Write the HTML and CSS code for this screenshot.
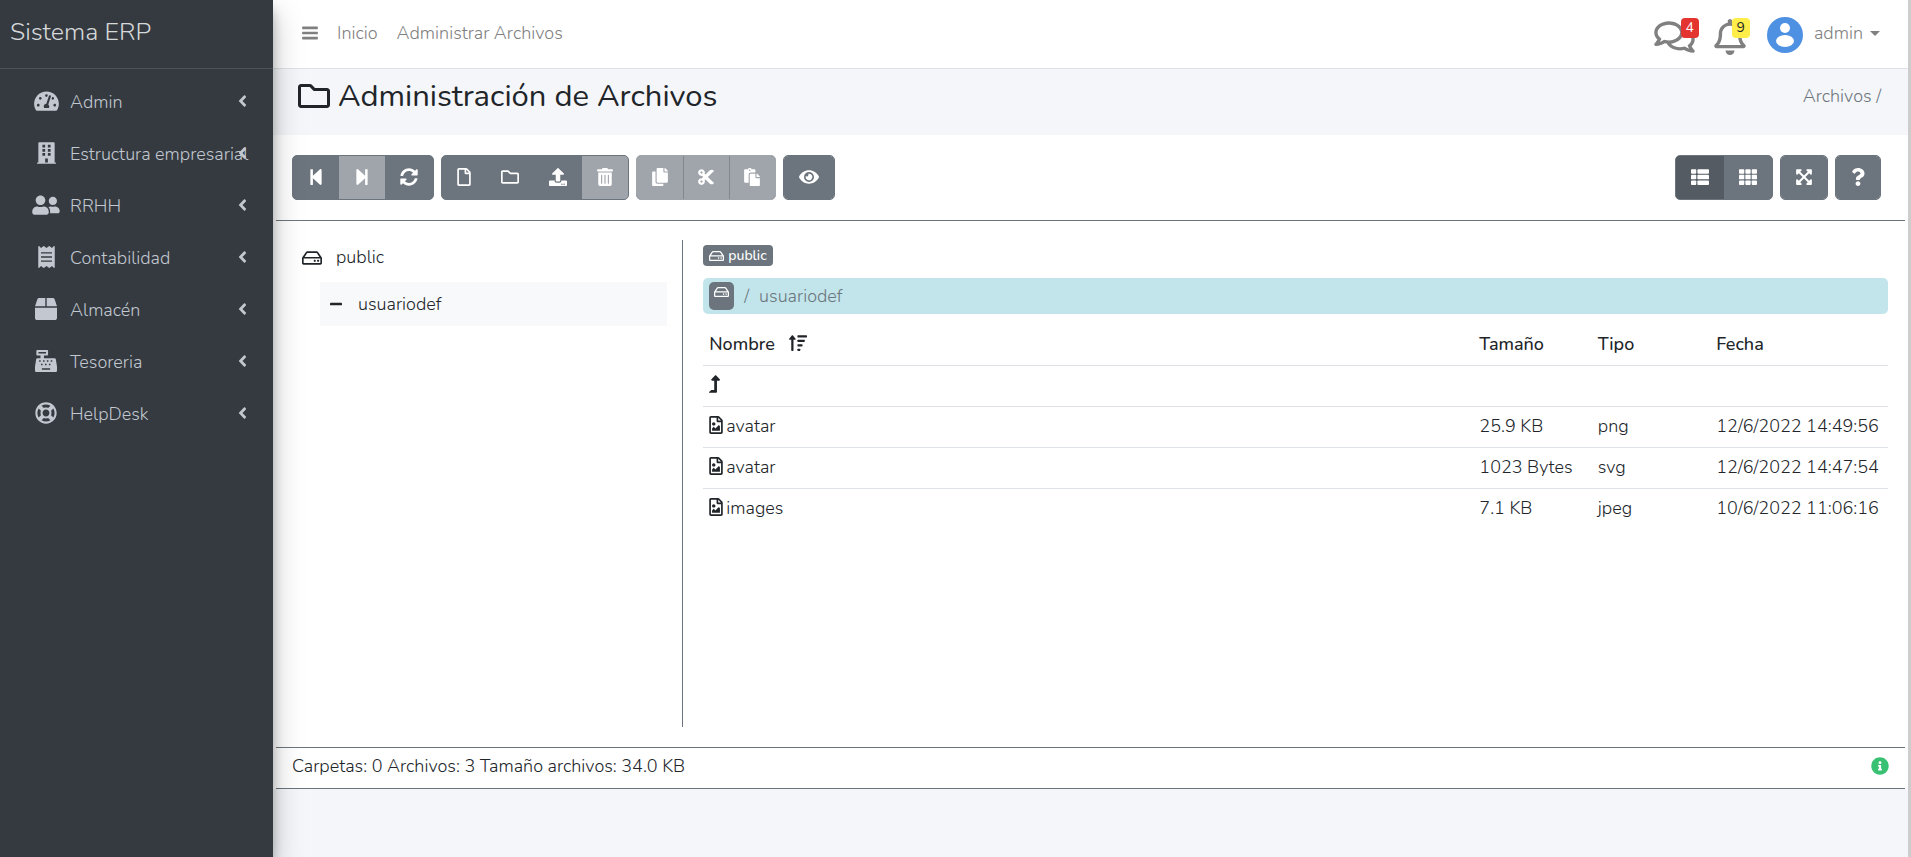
FILE: index.html
```html
<!DOCTYPE html>
<html lang="es">
<head>
<meta charset="utf-8">
<title>Administración de Archivos - Sistema ERP</title>
<link rel="stylesheet" href="styles.css">
</head>
<body>
<svg class="sprite" aria-hidden="true">
  <symbol id="i-dash" viewBox="0 0 576 512"><path d="M288 32C128.94 32 0 160.94 0 320c0 52.8 14.25 102.26 39.06 144.8 5.61 9.62 16.3 15.2 27.44 15.2h443c11.14 0 21.83-5.58 27.44-15.2C561.75 422.26 576 372.8 576 320c0-159.06-128.94-288-288-288zm0 64c14.71 0 26.58 10.13 30.32 23.65-1.11 2.26-2.64 4.23-3.45 6.67l-9.22 27.67c-5.13 3.49-10.97 6.01-17.64 6.01-17.67 0-32-14.33-32-32S270.33 96 288 96zM96 384c-17.67 0-32-14.33-32-32s14.33-32 32-32 32 14.33 32 32-14.33 32-32 32zm48-160c-17.67 0-32-14.33-32-32s14.33-32 32-32 32 14.33 32 32-14.33 32-32 32zm246.77-72.41l-61.33 184C343.13 347.33 352 364.54 352 384c0 11.72-3.38 22.55-8.88 32H232.88c-5.5-9.45-8.88-20.28-8.88-32 0-33.94 26.5-61.43 59.9-63.59l61.34-184.01c4.17-12.56 17.73-19.45 30.36-15.17 12.57 4.19 19.35 17.79 15.17 30.36zm14.66 57.2l15.52-46.55c3.47-1.29 7.13-2.23 11.05-2.23 17.67 0 32 14.33 32 32s-14.33 32-32 32c-11.38-.01-20.89-6.28-26.57-15.22zM480 384c-17.67 0-32-14.33-32-32s14.33-32 32-32 32 14.33 32 32-14.33 32-32 32z"/></symbol>
  <symbol id="i-building" viewBox="0 0 448 512"><path fill-rule="evenodd" d="M436 480h-20V24c0-13.3-10.7-24-24-24H56C42.700 0 32 10.700 32 24v456H12c-6.600 0-12 5.400-12 12v20h448v-20c0-6.600-5.400-12-12-12zM128 64h64v64h-64zM256 64h64v64h-64zM128 160h64v64h-64zM256 160h64v64h-64zM128 256h64v64h-64zM256 256h64v64h-64zM192 384h64v96h-64z"/></symbol>
  <symbol id="i-users" viewBox="0 0 640 512"><path d="M192 256c61.9 0 112-50.1 112-112S253.9 32 192 32 80 82.100 80 144s50.100 112 112 112zm76.800 32h-8.300c-20.800 10-43.900 16-68.500 16s-47.600-6-68.500-16h-8.300C51.600 288 0 339.600 0 403.200V432c0 26.500 21.500 48 48 48h288c26.500 0 48-21.500 48-48v-28.800c0-63.600-51.600-115.200-115.200-115.200zM480 256c53 0 96-43 96-96s-43-96-96-96-96 43-96 96 43 96 96 96zm48 32h-3.800c-13.900 4.800-28.600 8-44.200 8s-30.300-3.200-44.200-8H432c-20.400 0-39.200 5.900-55.700 15.400 24.400 26.300 39.700 61.200 39.700 99.800v38.400c0 2.200-.5 4.300-.6 6.400H592c26.500 0 48-21.500 48-48 0-61.900-50.100-112-112-112z"/></symbol>
  <symbol id="i-receipt" viewBox="0 0 384 512"><path fill-rule="evenodd" d="M358.400 3.200L320 48 265.600 3.200a15.900 15.900 0 0 0-19.200 0L192 48 137.600 3.200a15.900 15.900 0 0 0-19.200 0L64 48 25.600 3.200C15-4.700 0 2.800 0 16v480c0 13.200 15 20.700 25.600 12.800L64 464l54.400 44.800a15.900 15.900 0 0 0 19.200 0L192 464l54.400 44.800a15.900 15.900 0 0 0 19.200 0L320 464l38.400 44.800c10.500 7.900 25.600.4 25.600-12.800V16c0-13.200-15-20.700-25.600-12.800zM64 336h256v32H64zM64 240h256v32H64zM64 144h256v32H64z"/></symbol>
  <symbol id="i-box" viewBox="0 0 512 512"><path d="M509.500 184.600L458.900 32.800C452.400 13.200 434.100 0 413.400 0H272v192h238.700c-.4-2.500-.4-5-1.200-7.400zM240 0H98.600c-20.700 0-39 13.200-45.500 32.800L2.500 184.600c-.8 2.400-.8 4.900-1.200 7.400H240V0zM0 224v240c0 26.500 21.500 48 48 48h416c26.500 0 48-21.500 48-48V224H0z"/></symbol>
  <symbol id="i-register" viewBox="0 0 512 512"><path fill-rule="evenodd" d="M511 378l-26-160c-3-15-16-26-32-26H208v-64h80c9 0 16-7 16-16V16c0-9-7-16-16-16H48c-9 0-16 7-16 16v96c0 9 7 16 16 16h80v64H59c-16 0-29 11-32 26L1 378c-1 4-1 8-1 12v90c0 18 14 32 32 32h448c18 0 32-14 32-32v-90c0-4 0-8-1-12zM80 48h176v32H80zM96 240h36v36H96zM186 240h36v36h-36zM276 240h36v36h-36zM366 240h36v36h-36zM140 320h36v36h-36zM232 320h36v36h-36zM324 320h36v36h-36zM160 424h192v36H160z"/></symbol>
  <symbol id="i-ring" viewBox="0 0 512 512"><path d="M256 504c136.967 0 248-111.033 248-248S392.967 8 256 8 8 119.033 8 256s111.033 248 248 248zm-103.398-76.720l53.411-53.411c31.806 13.506 68.128 13.522 99.974 0l53.411 53.411c-63.217 38.319-143.579 38.319-206.796 0zM336 256c0 44.112-35.888 80-80 80s-80-35.888-80-80 35.888-80 80-80 80 35.888 80 80zm91.280 103.398l-53.411-53.411c13.505-31.806 13.522-68.128 0-99.974l53.411-53.411c38.319 63.217 38.319 143.579 0 206.796zM359.397 84.720l-53.411 53.411c-31.806-13.505-68.128-13.522-99.973 0L152.602 84.720c63.217-38.319 143.579-38.319 206.795 0zM84.720 152.602l53.411 53.411c-13.506 31.806-13.522 68.128 0 99.974L84.720 359.398c-38.319-63.217-38.319-143.579 0-206.796z"/></symbol>
  <symbol id="i-left" viewBox="0 0 256 512"><path d="M31.700 239l136-136c9.400-9.400 24.600-9.400 33.900 0l22.600 22.600c9.400 9.400 9.400 24.600 0 33.900L127.900 256l96.400 96.400c9.400 9.400 9.400 24.600 0 33.900L201.700 409c-9.400 9.400-24.600 9.400-33.900 0l-136-136c-9.500-9.400-9.500-24.600-.1-34z"/></symbol>
  <symbol id="i-bars" viewBox="0 0 448 512"><path d="M16 74h416c9 0 16 7 16 16v40c0 9-7 16-16 16H16c-9 0-16-7-16-16V90c0-9 7-16 16-16zM16 220h416c9 0 16 7 16 16v40c0 9-7 16-16 16H16c-9 0-16-7-16-16v-40c0-9 7-16 16-16zM16 366h416c9 0 16 7 16 16v40c0 9-7 16-16 16H16c-9 0-16-7-16-16v-40c0-9 7-16 16-16z"/></symbol>
  <symbol id="i-comments" viewBox="0 0 576 512"><path d="M532 386.200c27.500-27.100 44-61.100 44-98.200 0-80-76.500-146.100-176.200-157.900C368.300 72.500 294.300 32 208 32 93.100 32 0 103.600 0 192c0 37 16.500 71 44 98.200-15.300 30.700-37.300 54.500-37.700 54.900-6.300 6.700-8.100 16.500-4.400 25 3.600 8.500 12 14 21.200 14 53.500 0 96.700-20.200 125.200-38.800 9.200 2.100 18.700 3.700 28.400 4.900C208.100 407.600 281.800 448 368 448c20.800 0 40.800-2.400 59.800-6.800C456.300 459.700 499.400 480 553 480c9.200 0 17.500-5.500 21.200-14 3.600-8.500 1.900-18.300-4.400-25-.4-.3-22.500-24.100-37.800-54.800zm-392.800-92.300L122.100 305c-14.100 9.100-28.500 16.300-43.100 21.400 2.700-4.700 5.400-9.700 8-14.800l15.500-31.100L77.700 256C64.200 242.600 48 220.700 48 192c0-60.700 73.300-112 160-112s160 51.300 160 112-73.300 112-160 112c-16.500 0-33-1.900-49-5.600l-19.800-4.500zM498.300 352l-24.700 24.400 15.500 31.100c2.600 5.100 5.300 10.100 8 14.800-14.600-5.100-29-12.300-43.100-21.400l-17.100-11.100-19.900 4.600c-16 3.700-32.500 5.600-49 5.600-54 0-102.200-20.100-131.300-49.700C338 339.500 416 272.900 416 192c0-3.400-.4-6.700-.7-10C479.700 196.500 528 238.800 528 288c0 28.700-16.200 50.600-29.700 64z"/></symbol>
  <symbol id="i-bell" viewBox="0 0 448 512"><path d="M439.390 362.290c-19.320-20.760-55.470-51.990-55.470-154.290 0-77.700-54.480-139.900-127.940-155.160V32c0-17.670-14.320-32-31.980-32s-31.980 14.330-31.980 32v20.840C118.560 68.100 64.080 130.300 64.080 208c0 102.300-36.150 133.530-55.470 154.290-6 6.450-8.660 14.160-8.610 21.710.11 16.400 12.980 32 32.100 32h383.800c19.120 0 32-15.600 32.100-32 .05-7.550-2.610-15.270-8.610-21.710zM67.530 368c21.220-27.970 44.420-74.330 44.530-159.420 0-.2-.06-.38-.06-.58 0-61.860 50.140-112 112-112s112 50.140 112 112c0 .2-.06.38-.06.58.11 85.100 23.310 131.460 44.530 159.420H67.530zM224 512c35.320 0 63.970-28.650 63.970-64H160.030c0 35.350 28.650 64 63.970 64z"/></symbol>
  <symbol id="i-folder" viewBox="0 0 512 512"><path d="M464 128H272l-54.630-54.630c-6-6-14.140-9.370-22.630-9.370H48C21.490 64 0 85.490 0 112v288c0 26.510 21.490 48 48 48h416c26.510 0 48-21.490 48-48V176c0-26.510-21.490-48-48-48zm0 272H48V112h140.120l54.630 54.630c6 6 14.140 9.370 22.630 9.370H464v224z"/></symbol>
  <symbol id="i-back" viewBox="0 0 448 512"><path d="M64 468V44c0-6.600 5.400-12 12-12h48c6.600 0 12 5.400 12 12v176.400l195.500-181C352.100 22.300 384 36.600 384 64v384c0 27.400-31.900 41.700-52.500 24.600L136 292.700V468c0 6.600-5.400 12-12 12H76c-6.600 0-12-5.400-12-12z"/></symbol>
  <symbol id="i-forward" viewBox="0 0 448 512"><path d="M384 44v424c0 6.600-5.400 12-12 12h-48c-6.600 0-12-5.400-12-12V291.600l-195.500 181C95.900 489.700 64 475.400 64 448V64c0-27.400 31.900-41.700 52.500-24.600L312 219.300V44c0-6.600 5.400-12 12-12h48c6.600 0 12 5.400 12 12z"/></symbol>
  <symbol id="i-sync" viewBox="0 0 512 512"><path d="M370.720 133.280C339.458 104.008 298.888 87.962 255.848 88c-77.458.068-144.328 53.178-162.791 126.850-1.344 5.363-6.122 9.150-11.651 9.150H24.103c-7.498 0-13.194-6.807-11.807-14.176C33.933 94.924 134.813 8 256 8c66.448 0 126.791 26.136 171.315 68.685L463.030 40.970C478.149 25.851 504 36.559 504 57.941V192c0 13.255-10.745 24-24 24H345.941c-21.382 0-32.090-25.851-16.971-40.971l41.750-41.749zM32 296h134.059c21.382 0 32.090 25.851 16.971 40.971l-41.750 41.750c31.262 29.273 71.835 45.319 114.876 45.280 77.418-.07 144.315-53.144 162.787-126.849 1.344-5.363 6.122-9.150 11.651-9.150h57.304c7.498 0 13.194 6.807 11.807 14.176C478.067 417.076 377.187 504 256 504c-66.448 0-126.791-26.136-171.315-68.685L48.970 471.030C33.851 486.149 8 475.441 8 454.059V320c0-13.255 10.745-24 24-24z"/></symbol>
  <symbol id="i-file" viewBox="0 0 384 512"><path d="M369.900 97.900L286 14C277 5 264.800-.1 252.100-.1H48C21.500 0 0 21.500 0 48v416c0 26.500 21.500 48 48 48h288c26.500 0 48-21.500 48-48V131.900c0-12.700-5.100-25-14.100-34zM332.100 128H256V51.900l76.100 76.100zM48 464V48h160v104c0 13.300 10.700 24 24 24h104v288H48z"/></symbol>
  <symbol id="i-image" viewBox="0 0 384 512"><path d="M369.900 97.900L286 14C277 5 264.800-.1 252.100-.1H48C21.500 0 0 21.500 0 48v416c0 26.500 21.500 48 48 48h288c26.500 0 48-21.500 48-48V131.900c0-12.700-5.100-25-14.100-34zM332.100 128H256V51.900l76.100 76.100zM48 464V48h160v104c0 13.300 10.700 24 24 24h104v288H48zm32-48h224V288l-23.500-23.500c-4.700-4.700-12.300-4.700-17 0L176 352l-39.500-39.500c-4.700-4.700-12.300-4.700-17 0L80 352v64zm48-240c-26.500 0-48 21.500-48 48s21.500 48 48 48 48-21.500 48-48-21.500-48-48-48z"/></symbol>
  <symbol id="i-upload" viewBox="0 0 512 512"><path d="M296 384h-80c-13.300 0-24-10.700-24-24V192h-87.700c-17.800 0-26.700-21.500-14.100-34.100L242.300 5.700c7.500-7.500 19.800-7.500 27.300 0l152.200 152.200c12.600 12.600 3.700 34.100-14.100 34.100H320v168c0 13.300-10.700 24-24 24zm216-8v112c0 13.300-10.700 24-24 24H24c-13.300 0-24-10.700-24-24V376c0-13.300 10.700-24 24-24h136v8c0 30.900 25.100 56 56 56h80c30.900 0 56-25.100 56-56v-8h136c13.300 0 24 10.700 24 24zm-124 88c0-11-9-20-20-20s-20 9-20 20 9 20 20 20 20-9 20-20zm64 0c0-11-9-20-20-20s-20 9-20 20 9 20 20 20 20-9 20-20z"/></symbol>
  <symbol id="i-trash" viewBox="0 0 448 512"><path d="M32 464a48 48 0 0 0 48 48h288a48 48 0 0 0 48-48V128H32zm272-256a16 16 0 0 1 32 0v224a16 16 0 0 1-32 0zm-96 0a16 16 0 0 1 32 0v224a16 16 0 0 1-32 0zm-96 0a16 16 0 0 1 32 0v224a16 16 0 0 1-32 0zM432 32H312l-9.400-18.700A24 24 0 0 0 281.100 0H166.800a23.720 23.720 0 0 0-21.400 13.300L136 32H16A16 16 0 0 0 0 48v32a16 16 0 0 0 16 16h416a16 16 0 0 0 16-16V48a16 16 0 0 0-16-16z"/></symbol>
  <symbol id="i-copy" viewBox="0 0 448 512"><path d="M320 448v40c0 13.255-10.745 24-24 24H24c-13.255 0-24-10.745-24-24V120c0-13.255 10.745-24 24-24h72v296c0 30.879 25.121 56 56 56h168zm0-344V0H152c-13.255 0-24 10.745-24 24v368c0 13.255 10.745 24 24 24h272c13.255 0 24-10.745 24-24V128H344c-13.200 0-24-10.800-24-24zm120.971-31.029L375.029 7.029A24 24 0 0 0 358.059 0H352v96h96v-6.059a24 24 0 0 0-7.029-16.970z"/></symbol>
  <symbol id="i-cut" viewBox="0 0 448 512"><path d="M278.060 256L444.480 89.570c4.690-4.690 4.690-12.290 0-16.970-32.800-32.800-85.990-32.800-118.790 0L210.180 188.120l-24.860-24.860c4.310-10.920 6.680-22.810 6.680-35.260 0-53.020-42.980-96-96-96S0 74.980 0 128s42.980 96 96 96c4.540 0 8.990-.32 13.360-.93L142.290 256l-32.930 32.930c-4.370-.61-8.830-.93-13.360-.93-53.020 0-96 42.980-96 96s42.980 96 96 96 96-42.980 96-96c0-12.450-2.370-24.340-6.680-35.260l24.860-24.860L325.690 439.400c32.800 32.800 85.990 32.800 118.790 0 4.690-4.680 4.690-12.280 0-16.970L278.060 256zM96 160c-17.640 0-32-14.360-32-32s14.360-32 32-32 32 14.360 32 32-14.360 32-32 32zm0 256c-17.640 0-32-14.360-32-32s14.360-32 32-32 32 14.360 32 32-14.360 32-32 32z"/></symbol>
  <symbol id="i-paste" viewBox="0 0 448 512"><path d="M128 184c0-30.879 25.122-56 56-56h136V56c0-13.255-10.745-24-24-24h-80.610C204.306 12.890 183.637 0 160 0s-44.306 12.890-55.390 32H24C10.745 32 0 42.745 0 56v336c0 13.255 10.745 24 24 24h104V184zm32-144c13.255 0 24 10.745 24 24s-10.745 24-24 24-24-10.745-24-24 10.745-24 24-24zm184 248h104v200c0 13.255-10.745 24-24 24H184c-13.255 0-24-10.745-24-24V184c0-13.255 10.745-24 24-24h136v104c0 13.200 10.800 24 24 24zm104-38.059V256h-96v-96h6.059a24 24 0 0 1 16.970 7.029l65.941 65.941a24.002 24.002 0 0 1 7.030 16.971z"/></symbol>
  <symbol id="i-eye" viewBox="0 0 576 512"><path d="M572.520 241.400C518.290 135.590 410.930 64 288 64S57.680 135.640 3.480 241.410a32.350 32.350 0 0 0 0 29.190C57.710 376.410 165.070 448 288 448s230.320-71.640 284.520-177.410a32.350 32.350 0 0 0 0-29.190zM288 400a144 144 0 1 1 144-144 143.930 143.930 0 0 1-144 144zm0-240a95.310 95.310 0 0 0-25.310 3.790 47.850 47.850 0 0 1-66.900 66.900A95.780 95.780 0 1 0 288 160z"/></symbol>
  <symbol id="i-list" viewBox="0 0 512 512"><rect y="32" width="150" height="128" rx="24"/><rect y="192" width="150" height="128" rx="24"/><rect y="352" width="150" height="128" rx="24"/><rect x="182" y="32" width="330" height="128" rx="24"/><rect x="182" y="192" width="330" height="128" rx="24"/><rect x="182" y="352" width="330" height="128" rx="24"/></symbol>
  <symbol id="i-grid" viewBox="0 0 512 512"><rect y="32" width="150" height="128" rx="24"/><rect y="192" width="150" height="128" rx="24"/><rect y="352" width="150" height="128" rx="24"/><rect x="181" y="32" width="150" height="128" rx="24"/><rect x="181" y="192" width="150" height="128" rx="24"/><rect x="181" y="352" width="150" height="128" rx="24"/><rect x="362" y="32" width="150" height="128" rx="24"/><rect x="362" y="192" width="150" height="128" rx="24"/><rect x="362" y="352" width="150" height="128" rx="24"/></symbol>
  <symbol id="i-expand" viewBox="0 0 448 512"><path d="M448 344v112a23.940 23.940 0 0 1-24 24H312c-21.390 0-32.090-25.900-17-41l36.200-36.200L224 295.600 116.770 402.900 153 439c15.090 15.100 4.390 41-17 41H24a23.940 23.940 0 0 1-24-24V344c0-21.400 25.890-32.100 41-17l36.190 36.200L184.460 256 77.180 148.700 41 185c-15.100 15.100-41 4.400-41-17V56a23.940 23.940 0 0 1 24-24h112c21.390 0 32.090 25.900 17 41l-36.200 36.200L224 216.400l107.230-107.300L295 73c-15.090-15.100-4.390-41 17-41h112a23.940 23.940 0 0 1 24 24v112c0 21.400-25.890 32.100-41 17l-36.190-36.200L263.540 256l107.280 107.300L407 327.100c15.100-15.200 41-4.500 41 16.900z"/></symbol>
  <symbol id="i-question" viewBox="0 0 384 512"><path d="M202.021 0C122.202 0 70.503 32.703 29.914 91.026c-7.363 10.580-5.093 25.086 5.178 32.874l43.138 32.709c10.373 7.865 25.132 6.026 33.253-4.148 25.049-31.381 43.630-49.449 82.757-49.449 30.764 0 68.816 19.799 68.816 49.631 0 22.552-18.617 34.134-48.993 51.164-35.423 19.860-82.299 44.576-82.299 106.405V320c0 13.255 10.745 24 24 24h72.471c13.255 0 24-10.745 24-24v-5.773c0-42.860 125.268-44.645 125.268-160.627C377.504 66.256 286.902 0 202.021 0zM192 373.459c-38.196 0-69.271 31.075-69.271 69.271 0 38.195 31.075 69.270 69.271 69.270s69.271-31.075 69.271-69.271-31.075-69.270-69.271-69.270z"/></symbol>
  <symbol id="i-hdd" viewBox="0 0 576 512"><path d="M567.403 235.642L462.323 84.589A48 48 0 0 0 422.919 64H153.081a48 48 0 0 0-39.404 20.589L8.597 235.642A48.001 48.001 0 0 0 0 263.054V400c0 26.510 21.490 48 48 48h480c26.510 0 48-21.490 48-48V263.054c0-9.801-3-19.366-8.597-27.412zM153.081 112h269.838l77.913 112H75.168l77.913-112zM528 400H48V272h480v128zm-32-64c0 17.673-14.327 32-32 32s-32-14.327-32-32 14.327-32 32-32 32 14.327 32 32zm-96 0c0 17.673-14.327 32-32 32s-32-14.327-32-32 14.327-32 32-32 32 14.327 32 32z"/></symbol>
  <symbol id="i-minus" viewBox="0 0 448 512"><rect y="208" width="448" height="96" rx="32"/></symbol>
  <symbol id="i-sort" viewBox="0 0 512 512"><path d="M16 160h48v304c0 9 7 16 16 16h32c9 0 16-7 16-16V160h48c14 0 21-17 11-27l-80-96c-6-6-16-6-22 0L5 133c-10 10-3 27 11 27z"/><rect x="240" y="32" width="272" height="64" rx="16"/><rect x="240" y="160" width="208" height="64" rx="16"/><rect x="240" y="288" width="144" height="64" rx="16"/><rect x="240" y="416" width="80" height="64" rx="16"/></symbol>
  <symbol id="i-up" viewBox="0 0 320 512"><path d="M313.553 119.669L209.587 7.666c-9.485-10.214-25.676-10.229-35.174 0L70.438 119.669C56.232 134.969 67.062 160 88.025 160H152v272H68.024a11.996 11.996 0 0 0-8.485 3.515l-56 56C-4.021 499.074 1.333 512 12.024 512H208c13.255 0 24-10.745 24-24V160h63.966c20.878 0 31.851-24.969 17.587-40.331z"/></symbol>
  <symbol id="i-info" viewBox="0 0 512 512"><path d="M256 8C119.043 8 8 119.083 8 256c0 136.997 111.043 248 248 248s248-111.003 248-248C504 119.083 392.957 8 256 8zm0 110c23.196 0 42 18.804 42 42s-18.804 42-42 42-42-18.804-42-42 18.804-42 42-42zm56 254c0 6.627-5.373 12-12 12h-88c-6.627 0-12-5.373-12-12v-24c0-6.627 5.373-12 12-12h12v-64h-12c-6.627 0-12-5.373-12-12v-24c0-6.627 5.373-12 12-12h64c6.627 0 12 5.373 12 12v100h12c6.627 0 12 5.373 12 12v24z"/></symbol>
</svg>
<div class="app">
  <aside class="sidebar">
    <a class="brand" href="#">Sistema ERP</a>
    <nav class="menu">
      <a class="menu-item" href="#"><span class="menu-icon"><svg width="25" height="22"><use href="#i-dash"/></svg></span><span class="menu-label">Admin</span><svg class="angle" width="9" height="18"><use href="#i-left"/></svg></a>
      <a class="menu-item" href="#"><span class="menu-icon"><svg width="19" height="22"><use href="#i-building"/></svg></span><span class="menu-label">Estructura empresarial</span><svg class="angle" width="9" height="18"><use href="#i-left"/></svg></a>
      <a class="menu-item" href="#"><span class="menu-icon"><svg width="28" height="22"><use href="#i-users"/></svg></span><span class="menu-label">RRHH</span><svg class="angle" width="9" height="18"><use href="#i-left"/></svg></a>
      <a class="menu-item" href="#"><span class="menu-icon"><svg width="17" height="22"><use href="#i-receipt"/></svg></span><span class="menu-label">Contabilidad</span><svg class="angle" width="9" height="18"><use href="#i-left"/></svg></a>
      <a class="menu-item" href="#"><span class="menu-icon"><svg width="22" height="22"><use href="#i-box"/></svg></span><span class="menu-label">Almacén</span><svg class="angle" width="9" height="18"><use href="#i-left"/></svg></a>
      <a class="menu-item" href="#"><span class="menu-icon"><svg width="22" height="22"><use href="#i-register"/></svg></span><span class="menu-label">Tesoreria</span><svg class="angle" width="9" height="18"><use href="#i-left"/></svg></a>
      <a class="menu-item" href="#"><span class="menu-icon"><svg width="22" height="22"><use href="#i-ring"/></svg></span><span class="menu-label">HelpDesk</span><svg class="angle" width="9" height="18"><use href="#i-left"/></svg></a>
    </nav>
  </aside>
  <div class="page">
    <header class="topbar">
      <button class="plain" type="button" aria-label="Menú"><svg width="16" height="18"><use href="#i-bars"/></svg></button>
      <a href="#">Inicio</a>
      <a href="#">Administrar Archivos</a>
      <div class="user-area">
        <a class="notify" href="#" aria-label="Mensajes"><svg width="41" height="36"><use href="#i-comments"/></svg><span class="count count-red">4</span></a>
        <a class="notify" href="#" aria-label="Notificaciones"><svg width="32" height="36"><use href="#i-bell"/></svg><span class="count count-yellow">9</span></a>
        <svg class="avatar" width="36" height="36" viewBox="0 0 36 36"><circle cx="18" cy="18" r="18" fill="#4e91e3"/><circle cx="18" cy="11" r="5" fill="#fff"/><ellipse cx="18" cy="24" rx="9" ry="6" fill="#fff"/></svg>
        <button class="plain user" type="button">admin<span class="caret"></span></button>
      </div>
    </header>
    <div class="heading">
      <h1><svg width="32" height="32"><use href="#i-folder"/></svg>Administración de Archivos</h1>
      <div class="trail">Archivos /</div>
    </div>
    <main class="manager">
      <div class="toolbar">
        <div class="group">
          <button type="button" aria-label="Atrás"><svg width="16" height="18"><use href="#i-back"/></svg></button>
          <button type="button" aria-label="Adelante" disabled><svg width="16" height="18"><use href="#i-forward"/></svg></button>
          <button type="button" aria-label="Actualizar"><svg width="18" height="18"><use href="#i-sync"/></svg></button>
        </div>
        <div class="group">
          <button type="button" aria-label="Nuevo archivo"><svg width="14" height="18"><use href="#i-file"/></svg></button>
          <button type="button" aria-label="Nueva carpeta"><svg width="18" height="18"><use href="#i-folder"/></svg></button>
          <button type="button" aria-label="Subir"><svg width="18" height="18"><use href="#i-upload"/></svg></button>
          <button type="button" aria-label="Eliminar" disabled><svg width="16" height="18"><use href="#i-trash"/></svg></button>
        </div>
        <div class="group split">
          <button type="button" aria-label="Copiar" disabled><svg width="16" height="18"><use href="#i-copy"/></svg></button>
          <button type="button" aria-label="Cortar" disabled><svg width="16" height="18"><use href="#i-cut"/></svg></button>
          <button type="button" aria-label="Pegar" disabled><svg width="16" height="18"><use href="#i-paste"/></svg></button>
        </div>
        <div class="group">
          <button type="button" aria-label="Ocultos"><svg width="20" height="18"><use href="#i-eye"/></svg></button>
        </div>
        <div class="group push">
          <button class="active" type="button" aria-label="Lista"><svg width="18" height="18"><use href="#i-list"/></svg></button>
          <button type="button" aria-label="Cuadrícula"><svg width="18" height="18"><use href="#i-grid"/></svg></button>
        </div>
        <div class="group">
          <button type="button" aria-label="Pantalla completa"><svg width="16" height="18"><use href="#i-expand"/></svg></button>
        </div>
        <div class="group">
          <button type="button" aria-label="Ayuda"><svg width="14" height="18"><use href="#i-question"/></svg></button>
        </div>
      </div>
      <div class="panes">
        <section class="tree">
          <a class="disk" href="#"><svg width="20" height="18"><use href="#i-hdd"/></svg>public</a>
          <a class="branch" href="#"><svg width="12" height="14"><use href="#i-minus"/></svg>usuariodef</a>
        </section>
        <section class="files">
          <button class="disk-tag" type="button"><svg width="15" height="14"><use href="#i-hdd"/></svg>public</button>
          <nav class="crumbs">
            <a class="root" href="#" aria-label="Raíz"><svg width="15" height="14"><use href="#i-hdd"/></svg></a>
            <span>/</span><span>usuariodef</span>
          </nav>
          <table>
            <thead><tr><th class="c-name">Nombre<svg class="sort" width="18" height="18"><use href="#i-sort"/></svg></th><th class="c-size">Tamaño</th><th class="c-type">Tipo</th><th class="c-date">Fecha</th></tr></thead>
            <tbody>
              <tr><td colspan="4"><a href="#" aria-label="Subir nivel"><svg width="11" height="18"><use href="#i-up"/></svg></a></td></tr>
              <tr><td><svg class="kind" width="14" height="18"><use href="#i-image"/></svg>avatar</td><td>25.9 KB</td><td>png</td><td>12/6/2022 14:49:56</td></tr>
              <tr><td><svg class="kind" width="14" height="18"><use href="#i-image"/></svg>avatar</td><td>1023 Bytes</td><td>svg</td><td>12/6/2022 14:47:54</td></tr>
              <tr><td><svg class="kind" width="14" height="18"><use href="#i-image"/></svg>images</td><td>7.1 KB</td><td>jpeg</td><td>10/6/2022 11:06:16</td></tr>
            </tbody>
          </table>
        </section>
      </div>
      <footer class="status"><span>Carpetas: 0 Archivos: 3 Tamaño archivos: 34.0 KB</span><svg width="18" height="18"><use href="#i-info"/></svg></footer>
    </main>
  </div>
</div>
</body>
</html>
```
FILE: styles.css
```css
* { box-sizing: border-box; }
body {
  margin: 0;
  background: #f4f6f9;
  color: #212529;
  font: 350 18px/27px Nunito, Lato, sans-serif;
}
a { color: inherit; text-decoration: none; }
svg { fill: currentColor; flex: none; }
button { font: inherit; color: inherit; border: 0; margin: 0; cursor: pointer; }
.sprite { position: absolute; width: 0; height: 0; }
.plain { background: none; padding: 0; display: flex; align-items: center; }

.app {
  display: grid;
  grid-template-columns: 273px minmax(0, 1fr);
  min-height: 100vh;
  border-right: 3px solid #cdcdcd;
}

.sidebar {
  position: relative;
  z-index: 1;
  background: #343a40;
  color: #c2c7d0;
  font-weight: 300;
  box-shadow: 0 14px 28px rgba(0, 0, 0, .25), 0 10px 10px rgba(0, 0, 0, .22);
}
.brand {
  display: flex;
  align-items: center;
  height: 69px;
  padding: 0 10px 3px;
  border-bottom: 1px solid #4b545c;
  font-size: 25px;
  color: #d6d8d9;
}
.menu { display: flex; flex-direction: column; gap: 4px; padding: 9px 9px 0; }
.menu-item { position: relative; display: flex; align-items: center; height: 48px; padding-left: 18px; }
.menu-icon { display: flex; justify-content: center; width: 38px; margin-right: 5px; padding-bottom: 2px; }
.menu-label { white-space: nowrap; }
.angle { position: absolute; right: 17px; top: 14px; }

.topbar {
  display: flex;
  align-items: center;
  gap: 19px;
  height: 69px;
  padding: 0 28px 2px 29px;
  background: #fff;
  border-bottom: 1px solid #dee2e6;
  color: #808080;
  font-weight: 300;
}
.user-area { display: flex; align-items: center; gap: 19px; margin-left: auto; }
.notify { position: relative; display: flex; padding-top: 8px; }
.count {
  position: absolute;
  top: 7px;
  right: -4px;
  padding: 0 5px;
  border-radius: 4px;
  font-size: 14px;
  font-weight: 400;
  line-height: 20px;
}
.count-red { background: #e3342f; color: #fff; }
.count-yellow { background: #ffed4a; color: #212529; }
.avatar { margin: 4px 0 0 2px; }
.user { margin-left: -8px; }
.caret { margin-left: 7px; border: 5px solid transparent; border-top-color: currentColor; border-bottom: 0; }

.heading {
  display: flex;
  justify-content: space-between;
  align-items: center;
  height: 66px;
  padding: 0 27px 12px 25px;
  color: #6c757d;
}
.heading h1 {
  display: flex;
  align-items: center;
  gap: 8px;
  margin: 0;
  font-size: 31px;
  line-height: 40px;
  font-weight: 400;
  color: #212529;
}

.manager { padding: 0 3px; background: #fff; }
.toolbar { display: flex; gap: 7px; padding: 20px 24px 20px 16px; border-bottom: 1px solid #6c757d; }
.group { display: flex; height: 45px; border: 1px solid #6c757d; border-radius: 5px; background: #6c757d; overflow: hidden; }
.group button { display: flex; align-items: center; padding: 0 15px 2px; background: #6c757d; color: #fff; }
.group button:disabled { background: #a0a4ab; }
.group .active { background: #545b62; }
.group.split { border-color: #a0a4ab; }
.split button + button { box-shadow: inset 1px 0 #80878f; }
.push { margin-left: auto; }

.panes {
  display: grid;
  grid-template-columns: minmax(0, 1fr) minmax(0, 3fr);
  min-height: calc(100vh - 330px);
  padding: 19px 0 20px;
  border-bottom: 1px solid #6c757d;
}
.tree { padding: 4px 15px 0 26px; border-right: 1px solid #6c757d; }
.disk { display: flex; align-items: center; gap: 14px; }
.branch { display: flex; align-items: center; gap: 16px; height: 44px; margin: 11px 0 0 18px; padding: 0 10px; background: #f8f9fa; }
.files { padding: 5px 17px 0 20px; }
.disk-tag {
  display: flex;
  align-items: center;
  gap: 4px;
  height: 21px;
  padding: 0 6px;
  border-radius: 4px;
  background: #6c757d;
  color: #fff;
  font-size: 14px;
  font-weight: 500;
}
.crumbs {
  display: flex;
  align-items: center;
  gap: 10px;
  height: 36px;
  margin: 12px 0 11px;
  padding: 0 6px;
  border-radius: 5px;
  background: #c1e5ea;
  color: #6c757d;
}
.root { height: 28px; padding: 3px 5px; border-radius: 5px; background: #6c757d; color: #fff; line-height: 14px; }

table { width: 100%; table-layout: fixed; border-collapse: collapse; }
th, td { height: 41px; padding: 0 6px; text-align: left; vertical-align: middle; }
th { height: 40px; font-weight: 500; }
td { border-top: 1px solid #dee2e6; }
td svg, th svg { vertical-align: -2px; }
.c-name { width: 65%; }
.c-size, .c-type { width: 10%; }
.c-date { width: 15%; }
.sort { margin-left: 14px; }
.kind { margin-right: 3px; }

.status {
  display: flex;
  justify-content: space-between;
  align-items: center;
  height: 41px;
  padding: 0 16px 4px;
  border-bottom: 1px solid #6c757d;
}
.status svg { color: #38c172; }
```
